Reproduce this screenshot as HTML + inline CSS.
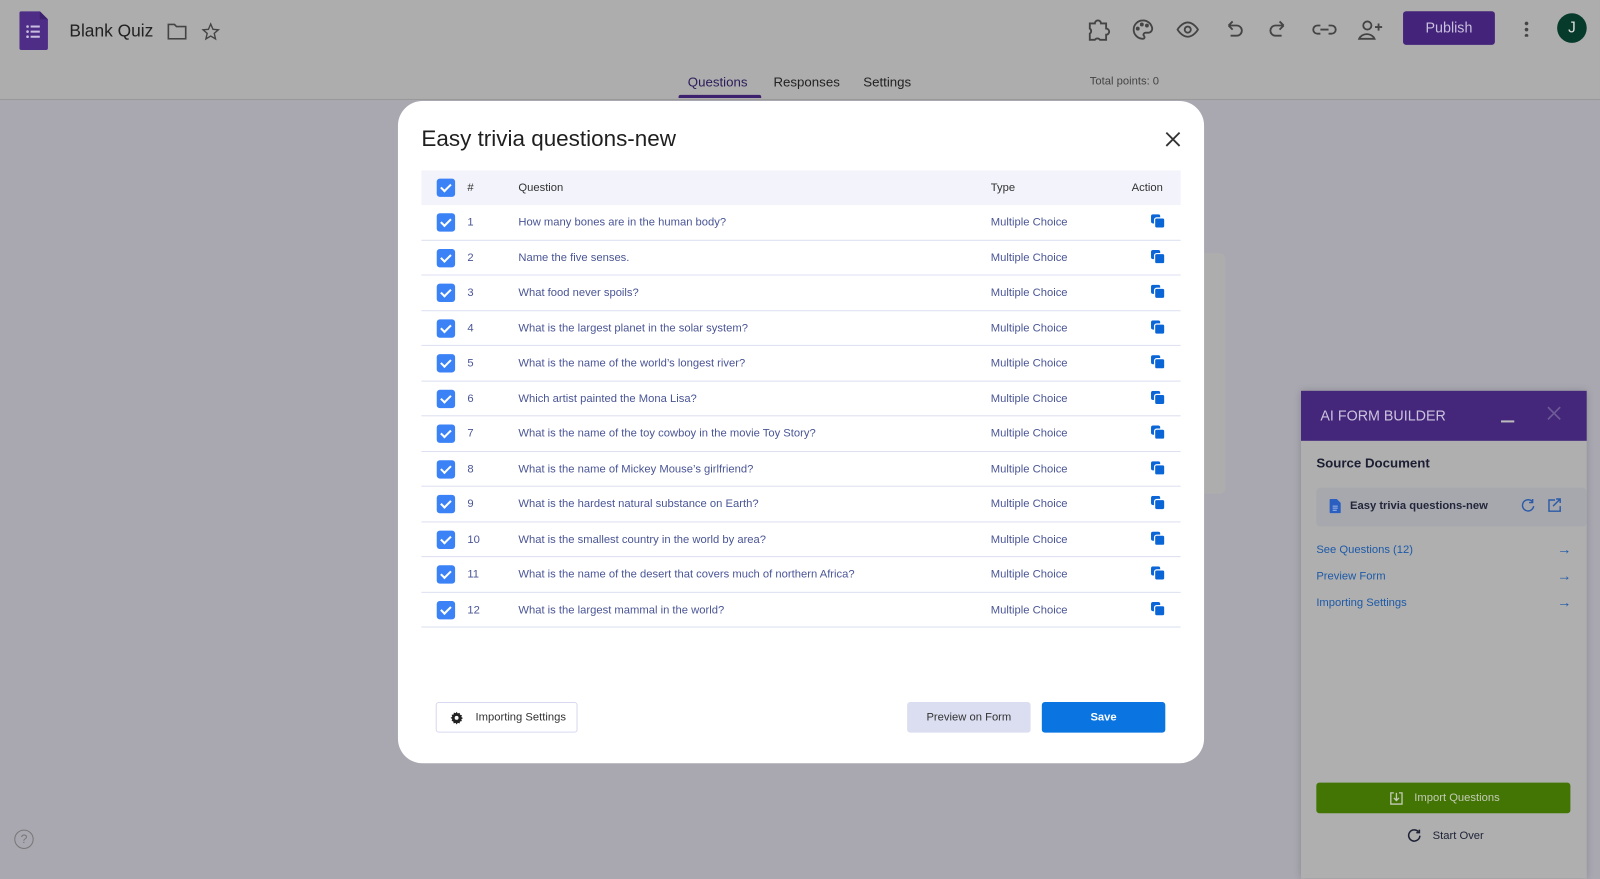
<!DOCTYPE html>
<html><head><meta charset="utf-8"><style>
*{box-sizing:border-box;margin:0;padding:0}
html,body{width:1600px;height:861px;overflow:hidden;background:#a9a8b1}
#wrap{position:absolute;left:0;top:0;width:1568px;height:844px;transform:scale(1.0204);transform-origin:0 0;font-family:"Liberation Sans",sans-serif}
.hdr{position:absolute;left:0;top:0;width:1568px;height:98px;background:#adadad;border-bottom:1px solid #999}
.abs{position:absolute}
.modal{position:absolute;left:390px;top:99px;width:790px;height:649px;background:#fff;border-radius:24px}
.row{position:absolute;left:23px;width:744px;height:34.5px;border-bottom:1.5px solid #dcdff0;font-size:11px;color:#4a5595}
.cb{position:absolute;left:15px;top:8px;width:18px;height:18px;background:#3b82f6;border-radius:3px}
.cb:after{content:"";position:absolute;left:6px;top:3px;width:4px;height:8px;border:solid #fff;border-width:0 2px 2px 0;transform:rotate(45deg)}
.row span{position:absolute;top:11px}
.cp{position:absolute;left:715px;top:9px;width:14px;height:14px}
.panel{position:absolute;left:1275px;top:383px;width:280px;height:478px;background:#afafaf;box-shadow:0 0 8px rgba(0,0,0,.2)}
.lnk{position:absolute;left:15px;font-size:11px;color:#1d5aa8;width:250px}
.lnk b{position:absolute;right:0;top:-3px;font-weight:normal;font-size:14px}
</style></head><body><div id="wrap">
<div class="hdr">
 <svg class="abs" style="left:19px;top:11px" width="28" height="38" viewBox="0 0 28 38"><path d="M2 0h18l8 8v28a2 2 0 0 1-2 2H2a2 2 0 0 1-2-2V2a2 2 0 0 1 2-2z" fill="#4e2d87"/><path d="M20 0v8h8z" fill="#3d216e"/><g fill="#c9bde0"><circle cx="8" cy="15" r="1.3"/><circle cx="8" cy="20" r="1.3"/><circle cx="8" cy="25" r="1.3"/><rect x="11" y="14" width="9" height="2"/><rect x="11" y="19" width="9" height="2"/><rect x="11" y="24" width="9" height="2"/></g></svg>
 <div class="abs" style="left:68px;top:21px;font-size:17px;color:#222">Blank Quiz</div>
 <svg class="abs" style="left:164px;top:23px" width="19" height="16" viewBox="0 0 19 16"><path d="M1 1h6l2 2h9v12H1z" fill="none" stroke="#444" stroke-width="1.6"/></svg>
 <svg class="abs" style="left:197px;top:22px" width="19" height="18" viewBox="0 0 24 24"><path d="M12 2l3 7 7 .6-5.4 4.7 1.7 7.2L12 17.8 5.7 21.5l1.7-7.2L2 9.6 9 9z" fill="none" stroke="#444" stroke-width="1.8"/></svg>
 <svg class="abs" style="left:1064px;top:17px" width="300" height="24" viewBox="0 0 300 24" fill="none" stroke="#444" stroke-width="1.8">
  <path d="M4 6h5a3 3 0 0 1 6 0h5v5a3 3 0 0 1 0 6v5h-6a3 3 0 0 0-5 0H4v-6a3 3 0 0 0 0-5z"/>
  <path d="M56 3a9 9 0 1 0 0 18c2 0 2-2 1-3s0-3 2-3h3a4 4 0 0 0 3-5 9 9 0 0 0-9-7z"/><circle cx="51" cy="11" r="1"/><circle cx="55" cy="7" r="1"/><circle cx="60" cy="8" r="1"/>
  <path d="M90 12s4-7 10-7 10 7 10 7-4 7-10 7-10-7-10-7z"/><circle cx="100" cy="12" r="3"/>
  <path d="M140 8h8a5 5 0 0 1 0 10h-6M140 8l4-4M140 8l4 4"/>
  <path d="M194 8h-8a5 5 0 0 0 0 10h6M194 8l-4-4M194 8l-4 4"/>
  <path d="M230 12h8M230 8h-3a4 4 0 0 0 0 8h3M238 8h3a4 4 0 0 1 0 8h-3"/>
  <circle cx="276" cy="8" r="4"/><path d="M268 21a8 7 0 0 1 15 0zM287 6v7M283.5 9.5h7"/>
 </svg>
 <div class="abs" style="left:1375px;top:11px;width:90px;height:33px;background:#44237a;border-radius:3px;color:#c9c0dd;font-size:14px;text-align:center;line-height:33px">Publish</div>
 <div class="abs" style="left:1494px;top:20px;width:4px;height:16px;background:radial-gradient(circle,#444 1.6px,transparent 2px) 0 0/4px 6px"></div>
 <div class="abs" style="left:1526px;top:13px;width:29px;height:29px;border-radius:50%;background:#063a2a;color:#ddd;font-size:15px;text-align:center;line-height:29px">J</div>
 <div class="abs" style="left:674px;top:73px;font-size:13px;color:#2c1c5a">Questions</div>
 <div class="abs" style="left:665px;top:93px;width:81px;height:3px;background:#3d216e;border-radius:2px 2px 0 0"></div>
 <div class="abs" style="left:758px;top:73px;font-size:13px;color:#222">Responses</div>
 <div class="abs" style="left:846px;top:73px;font-size:13px;color:#222">Settings</div>
 <div class="abs" style="left:1068px;top:74px;font-size:11px;color:#444">Total points: 0</div>
</div>
<div class="abs" style="left:1170px;top:248px;width:31px;height:236px;background:#adadad;border-radius:0 6px 6px 0"></div>
<div class="abs" style="left:14px;top:813px;width:19px;height:19px;border:1.5px solid #777;border-radius:50%;font-size:12px;color:#777;text-align:center;line-height:16px">?</div>

<div class="modal">
 <div class="abs" style="left:23px;top:24px;font-size:22px;color:#1f1f1f">Easy trivia questions-new</div>
 <svg class="abs" style="left:752px;top:30px" width="15" height="15" viewBox="0 0 15 15"><path d="M1 1l13 13M14 1L1 14" stroke="#333" stroke-width="1.8"/></svg>
 <div class="row" style="top:68px;height:34px;background:#f2f3fb;border:none;color:#333"><div class="cb"></div><span style="left:45px">#</span><span style="left:95px">Question</span><span style="left:558px">Type</span><span style="left:696px">Action</span></div>
 <div id="rows"></div>
 <div class="abs" style="left:37px;top:589px;width:139px;height:30px;border:1px solid #d6d9ef;border-radius:3px;font-size:11px;color:#333;line-height:28px;padding-left:38px">Importing Settings
  <svg class="abs" style="left:13px;top:8px" width="13" height="13" viewBox="0 0 24 24"><path d="M12 1l2 3 3.5-1 .5 3.5 3.5.5-1 3.5 3 2-3 2 1 3.5-3.5.5-.5 3.5-3.5-1-2 3-2-3-3.5 1-.5-3.5L3 17.5l1-3.5-3-2 3-2-1-3.5L6.5 6 7 2.5l3.5 1z" fill="#222"/><circle cx="12" cy="12" r="3.5" fill="#fff"/></svg></div>
 <div class="abs" style="left:499px;top:589px;width:121px;height:30px;background:#dbdef0;border-radius:3px;font-size:11px;color:#333;text-align:center;line-height:30px">Preview on Form</div>
 <div class="abs" style="left:631px;top:589px;width:121px;height:30px;background:#0a74e0;border-radius:3px;font-size:11px;color:#fff;font-weight:bold;text-align:center;line-height:30px">Save</div>
</div>

<div class="panel">
 <div class="abs" style="left:0;top:0;width:280px;height:49px;background:#44277a"></div>
 <div class="abs" style="left:19px;top:16px;font-size:14px;color:#ccc3dd">AI FORM BUILDER</div>
 <div class="abs" style="left:196px;top:29px;width:13px;height:2px;background:#bbb"></div>
 <svg class="abs" style="left:241px;top:15px" width="14" height="14"><path d="M1 1l12 12M13 1L1 13" stroke="#6e5a96" stroke-width="1.6"/></svg>
 <div class="abs" style="left:15px;top:63px;font-size:13px;font-weight:bold;color:#1c1f33">Source Document</div>
 <div class="abs" style="left:15px;top:95px;width:265px;height:38px;background:#a6a8ae;border-radius:4px"></div>
 <svg class="abs" style="left:28px;top:106px" width="11" height="14"><path d="M0 1a1 1 0 0 1 1-1h6l4 4v9a1 1 0 0 1-1 1H1a1 1 0 0 1-1-1z" fill="#2a5ec0"/><path d="M3 7h5M3 9h5M3 11h4" stroke="#a6bde8"/></svg>
 <div class="abs" style="left:48px;top:107px;font-size:11px;font-weight:bold;color:#23263a">Easy trivia questions-new</div>
 <svg class="abs" style="left:216px;top:105px" width="40" height="14" fill="none" stroke="#2b5aa8" stroke-width="1.4"><path d="M11 4a5.5 5.5 0 1 0 1 4M11 1v3.5H7.5"/><path d="M33 2h-6v11h11V8M31 8l7-7M34 1h4v4"/></svg>
 <div class="lnk" style="top:150px">See Questions (12)<b>→</b></div>
 <div class="lnk" style="top:176px">Preview Form<b>→</b></div>
 <div class="lnk" style="top:202px">Importing Settings<b>→</b></div>
 <div class="abs" style="left:15px;top:384px;width:249px;height:30px;background:#437505;border-radius:3px;color:#c4cbb6;font-size:11px;line-height:30px;padding-left:96px">Import Questions</div>
 <svg class="abs" style="left:87px;top:393px" width="13" height="13" fill="none" stroke="#c4cbb6" stroke-width="1.3"><path d="M4 1H1v11h11V1H9M6.5 1v7M4 6l2.5 2.5L9 6"/></svg>
 <svg class="abs" style="left:104px;top:429px" width="14" height="14" fill="none" stroke="#1e2236" stroke-width="1.5"><path d="M11 3a5.5 5.5 0 1 0 1.5 4M12 1v3H9"/></svg>
 <div class="abs" style="left:129px;top:430px;font-size:11px;color:#1e2236">Start Over</div>
</div>
</div>
<script>
var q=["How many bones are in the human body?","Name the five senses.","What food never spoils?","What is the largest planet in the solar system?","What is the name of the world’s longest river?","Which artist painted the Mona Lisa?","What is the name of the toy cowboy in the movie Toy Story?","What is the name of Mickey Mouse’s girlfriend?","What is the hardest natural substance on Earth?","What is the smallest country in the world by area?","What is the name of the desert that covers much of northern Africa?","What is the largest mammal in the world?"];
var h="";q.forEach(function(t,i){h+='<div class="row" style="top:'+(102+i*34.5)+'px"><div class="cb"></div><span style="left:45px">'+(i+1)+'</span><span style="left:95px">'+t+'</span><span style="left:558px">Multiple Choice</span><svg class="cp" viewBox="0 0 14 14"><rect x="0" y="0" width="9" height="9" rx="2" fill="#0a66d6"/><rect x="3.5" y="3.5" width="10" height="10" rx="2" fill="#0a66d6" stroke="#fff" stroke-width="1.2"/></svg></div>'});
document.getElementById("rows").innerHTML=h;
</script>
</body></html>
